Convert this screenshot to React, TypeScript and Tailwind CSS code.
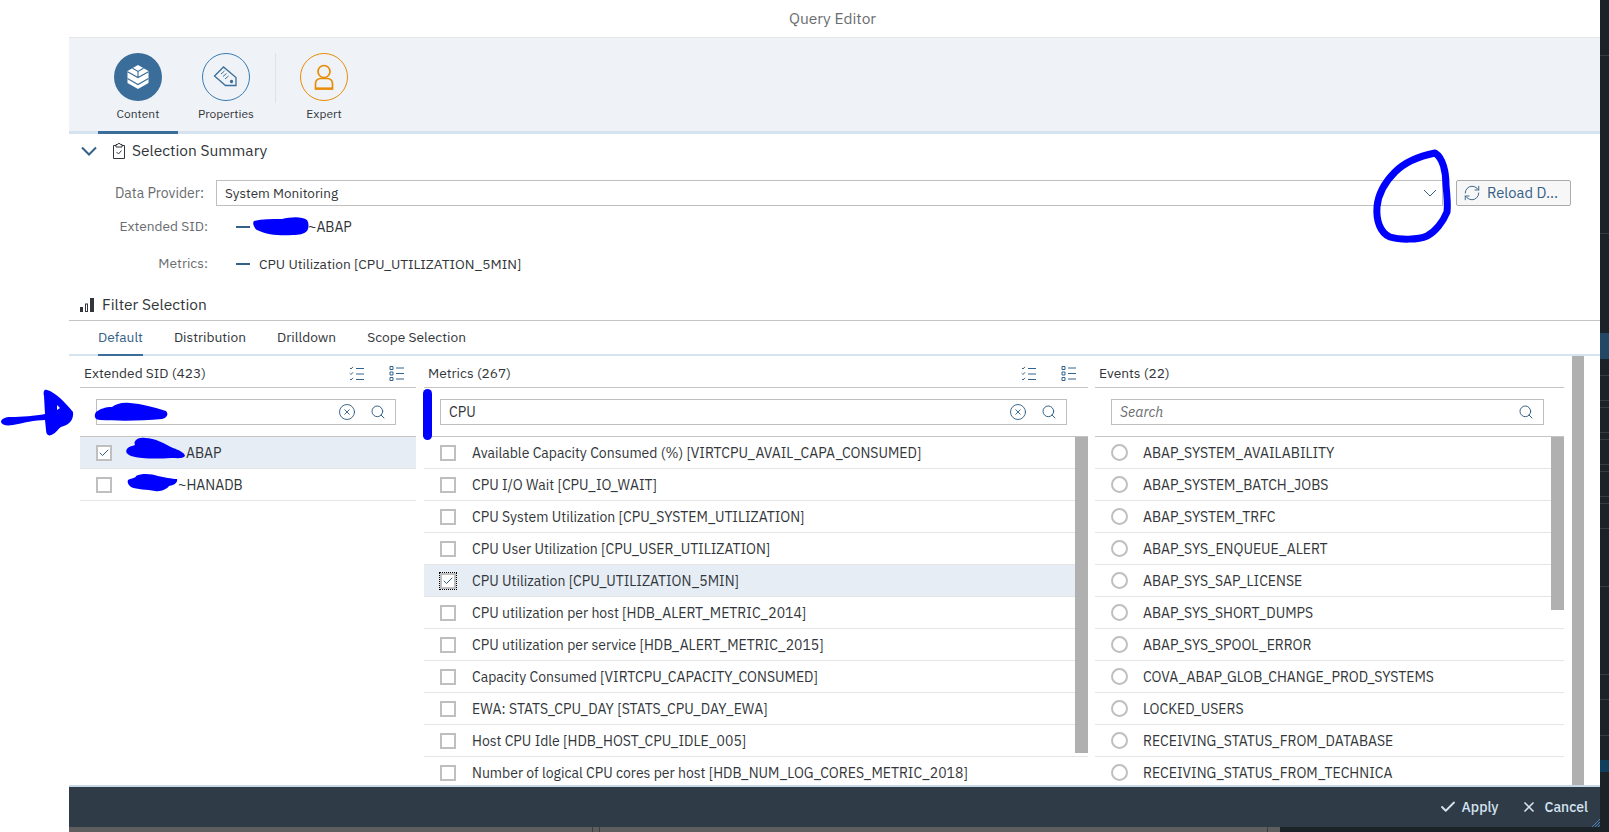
import React from 'react';
import { Check, X, Search, RefreshCw, CircleX } from 'lucide-react';

const font = 'font-["IBM_Plex_Sans","Noto_Sans","Open_Sans",sans-serif]';

const metrics = [
  'Available Capacity Consumed (%) [VIRTCPU_AVAIL_CAPA_CONSUMED]',
  'CPU I/O Wait [CPU_IO_WAIT]',
  'CPU System Utilization [CPU_SYSTEM_UTILIZATION]',
  'CPU User Utilization [CPU_USER_UTILIZATION]',
  'CPU Utilization [CPU_UTILIZATION_5MIN]',
  'CPU utilization per host [HDB_ALERT_METRIC_2014]',
  'CPU utilization per service [HDB_ALERT_METRIC_2015]',
  'Capacity Consumed [VIRTCPU_CAPACITY_CONSUMED]',
  'EWA: STATS_CPU_DAY [STATS_CPU_DAY_EWA]',
  'Host CPU Idle [HDB_HOST_CPU_IDLE_005]',
  'Number of logical CPU cores per host [HDB_NUM_LOG_CORES_METRIC_2018]',
];

const events = [
  'ABAP_SYSTEM_AVAILABILITY',
  'ABAP_SYSTEM_BATCH_JOBS',
  'ABAP_SYSTEM_TRFC',
  'ABAP_SYS_ENQUEUE_ALERT',
  'ABAP_SYS_SAP_LICENSE',
  'ABAP_SYS_SHORT_DUMPS',
  'ABAP_SYS_SPOOL_ERROR',
  'COVA_ABAP_GLOB_CHANGE_PROD_SYSTEMS',
  'LOCKED_USERS',
  'RECEIVING_STATUS_FROM_DATABASE',
  'RECEIVING_STATUS_FROM_TECHNICA',
];

const stripLines = [55, 233, 375, 400, 407, 432, 439, 464, 471, 496, 503, 528, 586, 674, 699, 735];

const CheckBox: React.FC<{ checked?: boolean; focused?: boolean }> = ({ checked, focused }) => (
  <span
    className={`flex h-4 w-4 shrink-0 items-center justify-center border-2 border-[#bfbfbf] bg-white ${
      focused ? 'outline-1 outline-offset-0 outline-black outline-dotted' : ''
    }`}
  >
    {checked && <Check size={12} strokeWidth={2} className="text-[#346187]" />}
  </span>
);

const ListIcons: React.FC = () => (
  <div className="flex items-center gap-[25px] text-[#346187]">
    <svg width="15" height="15" viewBox="0 0 15 15" fill="none" stroke="currentColor" strokeWidth="1">
      <path d="M1 2l1 1 2-2.200M1 7.500l1 1 2-2.200M1 13l1 1 2-2.200M7 2.500h8M7 8h8M7 13.500h8" />
    </svg>
    <svg width="15" height="15" viewBox="0 0 15 15" fill="none" stroke="currentColor" strokeWidth="1">
      <path d="M1 .5h3v3H1zM1 6h3v3H1zM1 11.500h3v3H1zM7 2h8M7 7.500h8M7 13h8" />
    </svg>
  </div>
);

const SearchBox: React.FC<{ value?: string; clear?: boolean; placeholder?: string }> = ({ value, clear, placeholder }) => (
  <div className="flex h-[26px] flex-1 items-center border border-[#bfbfbf] bg-white pr-[9px] pl-2">
    <span className={`flex-1 text-sm ${placeholder ? 'text-[#6a6d70] italic' : 'text-[#32363a]'}`}>
      {value || placeholder}
    </span>
    {clear && <CircleX size={18} strokeWidth={1.25} className="mr-[14px] text-[#346187]" />}
    <Search size={16} strokeWidth={1.5} className="text-[#346187]" />
  </div>
);

const ColumnHeader: React.FC<{ title: string; icons?: boolean }> = ({ title, icons }) => (
  <div className="flex h-[32px] shrink-0 items-center justify-between border-b border-[#c4c4c4] pt-1 pr-3 pl-1 text-[13.75px] text-[#32363a]">
    <span>{title}</span>
    {icons && <ListIcons />}
  </div>
);

const Ribbon: React.FC<{ label: string; active?: boolean; children: React.ReactNode; circle: string }> = ({
  label,
  active,
  children,
  circle,
}) => (
  <div className="relative flex w-[80px] flex-col items-center pt-[15px]">
    <div className={`flex h-12 w-12 items-center justify-center rounded-full ${circle}`}>{children}</div>
    <span className="mt-[5px] text-xs text-[#32363a]">{label}</span>
    {active && <span className="absolute right-0 bottom-[-3px] left-0 h-[3px] bg-[#3a6d99]" />}
  </div>
);

export default function App() {
  return (
    <div className={`relative flex h-[832px] w-[1609px] overflow-hidden bg-white text-[#32363a] ${font}`}>
      <div className="w-[69px] shrink-0 bg-white" />

      <div className="flex w-[1531px] shrink-0 flex-col">
        <div className="flex h-[37px] shrink-0 items-center justify-center pr-1 text-[15.5px] text-[#6a6d70]">Query Editor</div>

        {/* ribbon */}
        <div className="flex h-[97px] shrink-0 border-t border-b-[3px] border-t-[#e5e5e5] border-b-[#d5e3f1] bg-[#eff3f7] pl-[29px]">
          <Ribbon label="Content" active circle="bg-[#3a6d99]">
            <svg width="24" height="26" viewBox="0 0 24 26" fill="#fff" stroke="#3a6d99" strokeWidth="1.100">
              <path d="M12 1l10.500 6v12L12 25 1.500 19V7z" stroke="none" />
              <path d="M6.500 4.200L12 7.400l5.500-3.200M1.500 7.800L12 13.500l10.500-5.700M12 7.400v6.100M1.500 14.500L12 20.500l10.500-6" fill="none" />
            </svg>
          </Ribbon>
          <div className="ml-2">
            <Ribbon label="Properties" circle="border border-[#3a7cb3]">
              <svg width="26" height="26" viewBox="0 0 26 26" fill="none" stroke="#3a6d99" strokeWidth="1.300">
                <path d="M10.500 3L1.500 12l11 9.500h10.500v-8z" />
                <path d="M8 10l3.500-3M10 12.500l3.500-3M12 15l3.500-3" strokeWidth="1" />
                <circle cx="18.500" cy="17.500" r="1" fill="#3a6d99" />
              </svg>
            </Ribbon>
          </div>
          <div className="mt-[15px] mr-2 ml-[9px] h-[50px] w-px bg-[#dfe3e7]" />
          <Ribbon label="Expert" circle="border border-[#e78c07]">
            <svg width="20" height="27" viewBox="0 0 20 27" fill="none" stroke="#e78c07" strokeWidth="1.700">
              <circle cx="10" cy="7.500" r="6" />
              <path d="M1.500 25v-5.500a5 5 0 015-5h7a5 5 0 015 5V25z" />
              <path d="M1.500 24.500h17" strokeWidth="2.200" />
            </svg>
          </Ribbon>
        </div>

        {/* selection summary */}
        <div className="flex h-[35px] shrink-0 items-center pb-[2px] pl-3">
          <svg width="16" height="10" viewBox="0 0 16 10" fill="none" stroke="#346187" strokeWidth="2">
            <path d="M1 1.500l7 7 7-7" />
          </svg>
          <svg className="ml-[15px]" width="14" height="16" viewBox="0 0 14 16" fill="none" stroke="#32363a" strokeWidth="1">
            <path d="M4 2.500H1.500v13h11v-13H10M4 1.500h1.500a1.500 1 0 013 0H10v2.500H4z" />
            <path d="M4.500 9l2 2 3-3.500" />
          </svg>
          <span className="ml-[6px] text-[15.5px]">Selection Summary</span>
        </div>

        <div className="mt-[11px] flex h-[26px] shrink-0 items-center">
          <span className="w-[135px] text-right text-sm text-[#6a6d70]">Data Provider:</span>
          <div className="ml-3 flex h-[26px] w-[1227px] items-center justify-between border border-[#bfbfbf] pr-[5px] pl-2 text-[13.5px]">
            <span>System Monitoring</span>
            <svg width="14" height="8" viewBox="0 0 14 8" fill="none" stroke="#346187" strokeWidth="1">
              <path d="M1 1l6 6 6-6" />
            </svg>
          </div>
          <div className="ml-[13px] flex h-[26px] w-[115px] items-center rounded-[2px] border border-[#ababab] bg-[#f7f7f7] pl-[6px] text-[14.75px] text-[#346187]">
            <RefreshCw size={18} strokeWidth={1.25} />
            <span className="ml-[6px]">Reload D...</span>
          </div>
        </div>

        <div className="mt-[6px] flex h-[37px] shrink-0 items-start pt-[4px]">
          <span className="w-[139px] text-right text-[13.75px] text-[#6a6d70]">Extended SID:</span>
          <span className="mt-[10px] ml-[28px] h-[2px] w-[14px] bg-[#346187]" />
          <span className="ml-[58px] pt-[1px] text-sm">~ABAP</span>
        </div>

        <div className="flex h-[38px] shrink-0 items-start pt-[4px]">
          <span className="w-[139px] text-right text-[13.75px] text-[#6a6d70]">Metrics:</span>
          <span className="mt-[10px] ml-[28px] h-[2px] w-[14px] bg-[#346187]" />
          <span className="ml-[9px] pt-[1px] text-[13.75px]">CPU Utilization [CPU_UTILIZATION_5MIN]</span>
        </div>

        {/* filter selection */}
        <div className="flex h-[34px] shrink-0 items-center border-b border-[#c4c4c4] pt-[3px] pl-[11px]">
          <svg width="14" height="14" viewBox="0 0 14 14" fill="#32363a">
            <path d="M0 9h3v5H0zM5 5.500h3V14H5zM6 6.500V13h1V6.500zM10 0h4v14h-4z" fillRule="evenodd" />
          </svg>
          <span className="ml-2 text-[15.5px]">Filter Selection</span>
        </div>

        <div className="flex h-[35px] shrink-0 border-b-[2px] border-[#d5e3f1] pl-[29px] text-[13.75px]">
          <div className="relative flex items-center text-[#346187]">
            Default
            <span className="absolute right-0 bottom-[-2px] left-0 h-[2px] bg-[#3a6d99]" />
          </div>
          <div className="ml-[31px] flex items-center">Distribution</div>
          <div className="ml-[31px] flex items-center">Drilldown</div>
          <div className="ml-[31px] flex items-center">Scope Selection</div>
        </div>

        <div className="flex min-h-0 flex-1">
          {/* extended sid */}
          <div className="ml-[11px] w-[336px] shrink-0">
            <ColumnHeader title="Extended SID (423)" icons />
            <div className="flex h-[49px] items-center border-b border-[#c4c4c4] pr-5 pl-4">
              <SearchBox clear />
            </div>
            <div className="flex h-[32px] items-center border-b border-[#e5e5e5] bg-[#e6edf5] pl-4 text-sm">
              <CheckBox checked />
              <span className="ml-[74px]">ABAP</span>
            </div>
            <div className="flex h-[32px] items-center border-b border-[#e5e5e5] pl-4 text-sm">
              <CheckBox />
              <span className="ml-[66px]">~HANADB</span>
            </div>
          </div>

          {/* metrics */}
          <div className="ml-2 flex w-[664px] min-w-0 shrink-0 flex-col">
            <ColumnHeader title="Metrics (267)" icons />
            <div className="flex h-[49px] shrink-0 items-center border-b border-[#c4c4c4] pr-[21px] pl-4">
              <SearchBox value="CPU" clear />
            </div>
            <div className="relative min-h-0 flex-1 overflow-hidden">
              {metrics.map((m, i) => (
                <div
                  key={m}
                  className={`flex h-[32px] items-center border-b border-[#e5e5e5] pl-4 text-sm ${
                    i === 4 ? 'bg-[#e6edf5]' : ''
                  }`}
                >
                  <CheckBox checked={i === 4} focused={i === 4} />
                  <span className="ml-4">{m}</span>
                </div>
              ))}
              <div className="absolute top-0 right-0 h-[316px] w-[13px] bg-[#b0b0b0]" />
            </div>
          </div>

          {/* events */}
          <div className="ml-[7px] flex w-[469px] shrink-0 flex-col">
            <ColumnHeader title="Events (22)" />
            <div className="flex h-[49px] shrink-0 items-center border-b border-[#c4c4c4] pr-[20px] pl-4">
              <SearchBox placeholder="Search" />
            </div>
            <div className="relative min-h-0 flex-1 overflow-hidden">
              {events.map((e) => (
                <div key={e} className="flex h-[32px] items-center border-b border-[#e5e5e5] pl-[16px] text-sm">
                  <span className="h-[17px] w-[17px] shrink-0 rounded-full border-2 border-[#bfbfbf] bg-white" />
                  <span className="ml-[15px]">{e}</span>
                </div>
              ))}
              <div className="absolute top-0 right-0 h-[173px] w-[13px] bg-[#b0b0b0]" />
            </div>
          </div>

          <div className="ml-[8px] h-[429px] w-[12px] bg-[#b0b0b0]" />
        </div>

        {/* footer */}
        <div className="relative flex h-[42px] shrink-0 items-center justify-end border-t-[2px] border-[#c6d8e8] bg-[#2f3b47] pr-[12px] text-sm font-medium text-[#d5e3f1]">
          <Check size={18} strokeWidth={2.5} />
          <span className="ml-[5px]">Apply</span>
          <X size={16} strokeWidth={2.5} className="ml-[22px]" />
          <span className="ml-[8px]">Cancel</span>
          <svg className="absolute right-0 bottom-0" width="8" height="8" viewBox="0 0 8 8" stroke="#4a80b4" strokeWidth="1">
            <path d="M0 8l8-8M3 8l5-5M6 8l2-2" />
          </svg>
        </div>
        <div className="flex h-[5px] shrink-0">
          <div className="flex w-[1211px] bg-[#5e5e5e]">
            <span className="ml-[523px] w-px bg-[#3e3e3e]" />
            <span className="ml-[6px] w-px bg-[#3e3e3e]" />
            <span className="ml-[667px] w-px bg-[#3e3e3e]" />
          </div>
          <div className="flex-1 bg-[#1b2329]" />
        </div>
      </div>

      {/* app behind the dialog */}
      <svg className="shrink-0 bg-[#1b2329]" width="9" height="832" viewBox="0 0 9 832">
        {stripLines.map((y) => (
          <rect key={y} x="0" y={y} width="9" height="1" fill="#343c41" />
        ))}
        <rect x="0" y="333" width="9" height="26" fill="#234865" />
        <rect x="0" y="760" width="9" height="12" fill="#0f3f5c" />
      </svg>

      {/* blue marker scribbles on top of the screenshot */}
      <svg className="pointer-events-none absolute inset-0" width="1609" height="832" fill="#0000ff">
        <path
          d="M1435 153C1443 158 1446 172 1446 185C1447 195 1448 205 1447 212C1443 222 1435 232 1427 236C1418 240 1400 240 1390 237C1380 233 1376 220 1377 207C1378 195 1385 182 1395 172C1405 162 1420 156 1435 153Z"
          fill="none"
          stroke="#0000ff"
          strokeWidth="7"
          strokeLinecap="round"
          strokeLinejoin="round"
        />
        <path d="M47 390c8 2 18 12 26 22 1 8-4 13-12 15-3 2-5 6-8 7-4 3-7 1-7-4l-1-10c-10 0-22 3-32 5-7 1-11 0-12-3 0-3 4-5 10-5 10 0 24-1 34-3l-1-18c-1-4 0-7 3-6z" />
        <path d="M57 405l3 3-3 2z" fill="#ffffff" />
        <rect x="423" y="389" width="9" height="51" rx="4.500" />
        <path d="M96 412c4-3 9-5 16-5 4-3 10-5 18-4 12 1 24 4 36 8 3 3 1 7-4 8-20 2-44 2-62 1-4 0-7-3-4-8z" />
        <path d="M254 221c8-2 18-2 28-2 8-2 20-3 25 1 2 3 2 8 0 11-3 3-8 4-14 4-12 1-26 0-36-5-3-2-5-7-3-9z" />
        <path d="M127 449c2-3 6-3 8-4-2-4 3-8 10-7 10 0 20 6 28 10 6 2 12 5 12 8-2 3-8 2-14 2-14 1-30 1-40-2-4-2-6-4-4-7z" />
        <path d="M128 480c4-2 8-2 8-4 6-3 16-2 22 0 6 1 14 3 19 3 1 3-2 6-8 7-2 3-8 6-14 5-8-2-18-1-24-4-3-2-4-5-3-7z" />
      </svg>
    </div>
  );
}
